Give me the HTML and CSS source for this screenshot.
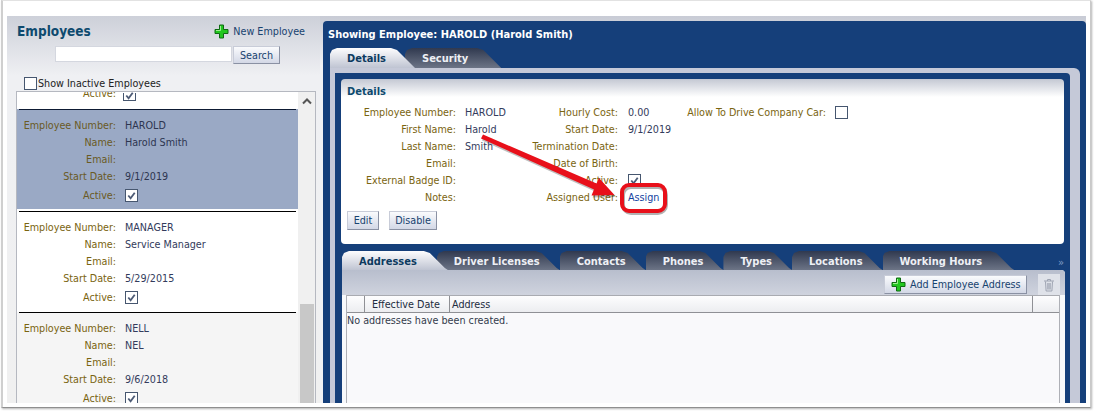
FILE: index.html
```html
<!DOCTYPE html>
<html lang="en">
<head>
<meta charset="utf-8">
<title>Employees</title>
<link rel="stylesheet" href="styles.css">
</head>
<body>
<div class="frame">
  <div class="app">
    <aside class="left">
      <div class="left-head">
        <h1 class="left-title">Employees</h1>
        <a class="new-link">
          <svg class="plus" viewBox="0 0 15 15"><path d="M5.500 1h4v4.500H14v4H9.500V14h-4V9.500H1v-4h4.500z" fill="#22c71f" stroke="#0f6b12" stroke-width="1" stroke-linejoin="round"/><path d="M6.500 2v4.500H2" fill="none" stroke="#9cf08f" stroke-width="1"/></svg>
          New Employee
        </a>
      </div>
      <div class="search-row">
        <input class="search-input" type="text" aria-label="Search">
        <button class="btn search-btn">Search</button>
      </div>
      <label class="inactive"><span class="cb"></span>Show Inactive Employees</label>
      <div class="list">
        <div class="list-items">
          <div class="partial">
            <span class="lbl">Active:</span>
            <span class="cb on"><svg viewBox="0 0 12 12"><path d="M2.500 6l2.500 3 4.500-6" fill="none" stroke="#4d5b76" stroke-width="2"/></svg></span>
          </div>
          <div class="emp sel">
            <div class="r"><span class="lbl">Employee Number:</span><span class="val">HAROLD</span></div>
            <div class="r"><span class="lbl">Name:</span><span class="val">Harold Smith</span></div>
            <div class="r"><span class="lbl">Email:</span><span class="val"></span></div>
            <div class="r"><span class="lbl">Start Date:</span><span class="val">9/1/2019</span></div>
            <div class="r last"><span class="lbl">Active:</span><span class="cb on"><svg viewBox="0 0 12 12"><path d="M2.500 6l2.500 3 4.500-6" fill="none" stroke="#4d5b76" stroke-width="2"/></svg></span></div>
          </div>
          <div class="emp">
            <div class="r"><span class="lbl">Employee Number:</span><span class="val">MANAGER</span></div>
            <div class="r"><span class="lbl">Name:</span><span class="val">Service Manager</span></div>
            <div class="r"><span class="lbl">Email:</span><span class="val"></span></div>
            <div class="r"><span class="lbl">Start Date:</span><span class="val">5/29/2015</span></div>
            <div class="r last"><span class="lbl">Active:</span><span class="cb on"><svg viewBox="0 0 12 12"><path d="M2.500 6l2.500 3 4.500-6" fill="none" stroke="#4d5b76" stroke-width="2"/></svg></span></div>
          </div>
          <div class="emp alt">
            <div class="r"><span class="lbl">Employee Number:</span><span class="val">NELL</span></div>
            <div class="r"><span class="lbl">Name:</span><span class="val">NEL</span></div>
            <div class="r"><span class="lbl">Email:</span><span class="val"></span></div>
            <div class="r"><span class="lbl">Start Date:</span><span class="val">9/6/2018</span></div>
            <div class="r last"><span class="lbl">Active:</span><span class="cb on"><svg viewBox="0 0 12 12"><path d="M2.500 6l2.500 3 4.500-6" fill="none" stroke="#4d5b76" stroke-width="2"/></svg></span></div>
          </div>
        </div>
        <div class="scrollbar">
          <svg class="chev" viewBox="0 0 10 7"><path d="M1 5.500l4-4 4 4" fill="none" stroke="#555" stroke-width="2"/></svg>
          <div class="thumb"></div>
        </div>
      </div>
    </aside>

    <main class="right">
      <div class="show-title">Showing Employee: HAROLD (Harold Smith)</div>
      <div class="tabs tabs-top">
        <div class="tab active tab-a">Details</div>
        <div class="tab tab-b">Security</div>
      </div>
      <div class="band">
        <div class="navy">
          <section class="card">
            <h2 class="card-title">Details</h2>
            <div class="form">
              <div class="fcol c1">
                <span class="lbl">Employee Number:</span><span class="val">HAROLD</span>
                <span class="lbl">First Name:</span><span class="val">Harold</span>
                <span class="lbl">Last Name:</span><span class="val">Smith</span>
                <span class="lbl">Email:</span><span class="val"></span>
                <span class="lbl">External Badge ID:</span><span class="val"></span>
                <span class="lbl">Notes:</span><span class="val"></span>
              </div>
              <div class="fcol c2">
                <span class="lbl">Hourly Cost:</span><span class="val">0.00</span>
                <span class="lbl">Start Date:</span><span class="val">9/1/2019</span>
                <span class="lbl">Termination Date:</span><span class="val"></span>
                <span class="lbl">Date of Birth:</span><span class="val"></span>
                <span class="lbl">Active:</span><span class="cb on"><svg viewBox="0 0 12 12"><path d="M2.500 6l2.500 3 4.500-6" fill="none" stroke="#4d5b76" stroke-width="2"/></svg></span>
                <span class="lbl">Assigned User:</span><a class="assign">Assign</a>
              </div>
              <div class="fcol c3">
                <span class="lbl">Allow To Drive Company Car:</span><span class="cb"></span>
              </div>
            </div>
            <div class="actions">
              <button class="btn edit-btn">Edit</button>
              <button class="btn disable-btn">Disable</button>
            </div>
          </section>
          <div class="tabs tabs-sub">
            <div class="tab active tab-addr">Addresses</div>
            <div class="tab tab-dl">Driver Licenses</div>
            <div class="tab">Contacts</div>
            <div class="tab">Phones</div>
            <div class="tab">Types</div>
            <div class="tab">Locations</div>
            <div class="tab tab-wh">Working Hours</div>
            <span class="more">»</span>
          </div>
          <section class="lower">
            <div class="toolbar">
              <button class="btn add-btn">
                <svg class="plus" viewBox="0 0 15 15"><path d="M5.500 1h4v4.500H14v4H9.500V14h-4V9.500H1v-4h4.500z" fill="#22c71f" stroke="#0f6b12" stroke-width="1" stroke-linejoin="round"/><path d="M6.500 2v4.500H2" fill="none" stroke="#9cf08f" stroke-width="1"/></svg>
                Add Employee Address
              </button>
              <div class="trash-btn">
                <svg viewBox="0 0 12 14" class="trash"><path d="M1 3h10M4.500 3V1.500h3V3M2.500 3.500l.6 9.500h5.800l.6-9.500M4.800 5v6.500M6 5v6.500M7.200 5v6.500" fill="none" stroke="#9ea4b2" stroke-width="1"/></svg>
              </div>
            </div>
            <div class="table">
              <div class="thead">
                <div class="th"></div>
                <div class="th th-date">Effective Date</div>
                <div class="th">Address</div>
                <div class="th"></div>
              </div>
              <div class="tbody">No addresses have been created.</div>
            </div>
          </section>
        </div>
      </div>
    </main>
  </div>
</div>
<svg class="annot" viewBox="0 0 1094 411" aria-hidden="true">
  <rect class="annot-shadow" x="623" y="187" width="43" height="26" rx="8"/>
  <rect class="annot-box" x="622" y="185" width="43" height="26" rx="7"/>
  <polygon class="annot-arrow-shadow" points="484,136 597.500,185 600,180 615.500,197 592.500,197.500 595,191.500 482,140.500"/>
  <polygon class="annot-arrow" points="483,134.500 596.500,183.500 599,178 614.500,195 591.500,195.500 594,189.500 481,138.500"/>
</svg>
</body>
</html>
```
FILE: styles.css
```css
* { box-sizing: border-box; }
html, body { margin: 0; padding: 0; background: #fff; }
body {
  width: 1094px;
  height: 411px;
  overflow: hidden;
  position: relative;
  font-family: "DejaVu Sans Condensed", "DejaVu Sans", sans-serif;
  font-size: 10.7px;
  color: #333b5c;
}
.frame {
  width: 1090px;
  height: 408px;
  margin-left: 1px;
  background: #fff;
  border-top: 1px solid #e2e2e2;
  border-left: 2px solid #cfcfcf;
  border-right: 1px solid #c9c9c9;
  border-bottom: 1px solid #8f8f8f;
  box-shadow: 1px 1px 2px rgba(0,0,0,.3);
  padding: 15px 4px 4px 4px;
}
.app {
  display: flex;
  height: 387px;
  overflow: hidden;
  background: linear-gradient(#c8cbd5 0, #f2f2f4 50px, #f2f2f4 100%);
}
.lbl { color: #7a6410; text-align: right; white-space: nowrap; }
.val { color: #333b5c; white-space: nowrap; }

/* left column */
.left { width: 313px; flex: none; background: linear-gradient(#cdd0d9 0, #eff0f3 60px, #f0f0f0 100%); display: flex; flex-direction: column; }
.left-head { height: 30px; display: flex; justify-content: space-between; align-items: center; padding: 0 15px 0 10px; }
.left-title { margin: 0; font-size: 13.5px; font-weight: 700; color: #0e4a6e; }
.new-link { display: flex; align-items: center; gap: 4px; color: #17436f; }
.plus { width: 15px; height: 15px; flex: none; }
.search-row { display: flex; margin: 0 0 0 48px; height: 17px; }
.search-input { width: 177px; height: 16px; border: 1px solid #d4d7df; background: #fff; padding: 0; margin-right: 1px; }
.btn {
  font: inherit;
  color: #17436f;
  height: 19px;
  padding: 0 6px;
  border: 1px solid #c8ccd8;
  border-right-color: #8a91a3;
  border-bottom-color: #8a91a3;
  background: linear-gradient(#fafbfd, #d3d8e6);
  display: inline-flex;
  align-items: center;
  justify-content: center;
}
.search-btn { height: 18px; width: 47px; padding: 0; }
.edit-btn { width: 32px; padding: 0; }
.disable-btn { width: 48px; padding: 0; }
.inactive { display: flex; align-items: center; height: 14px; margin: 13px 0 0 17px; color: #222; }
.inactive .cb { margin-right: 1px; }
.cb { width: 13px; height: 13px; border: 1px solid #46566f; background: #fff; display: inline-block; flex: none; }
.cb.on svg { display: block; width: 11px; height: 11px; }
.list { margin: 1px 0 0 9px; width: 300px; height: 312px; border: 1px solid #b5b8c0; border-bottom: 0; display: flex; background: #fff; overflow: hidden; flex: none; }
.list-items { width: 281px; flex: none; }
.partial { height: 16px; display: flex; align-items: flex-end; gap: 7px; overflow: hidden; padding-bottom: 7px; }
.partial .lbl { width: 99px; line-height: 13px; margin-bottom: 1px; }
.partial .cb { border-top: 0; height: 8px; }
.partial .cb svg { margin-top: -3px; }
.emp { margin: 0 0 2px; padding: 8px 2px 0; height: 99px; background: #fff; }
.emp::before { content: ""; display: block; height: 1px; background: #000; margin: -8px 0 7px; }
.emp.sel { background: #9aa9c5; height: 100px; margin-top: 1px; padding-top: 0; }
.emp.sel::before { margin-top: 0; background: #0d1a33; }
.emp.sel .lbl { color: #6a5a24; }
.emp.sel .val { color: #2d3550; }
.emp.alt { background: #f5f5f5; margin: 0; height: 110px; }
.r { display: grid; grid-template-columns: 97px auto; column-gap: 9px; height: 17px; line-height: 17px; align-items: center; }
.r.last { height: 18px; margin-top: 1px; }
.scrollbar { flex: 1; background: #f0f0f0; position: relative; display: flex; flex-direction: column; align-items: center; padding-top: 6px; }
.chev { width: 10px; height: 7px; }
.thumb { position: absolute; left: 2px; right: 1px; top: 212px; bottom: 0; background: #c8c8c8; }

/* right column */
.right { width: 763px; margin: 5px 0 0 3px; background: #153f7a; border-radius: 4px 4px 0 0; flex: none; overflow: hidden; }
.show-title { height: 27px; padding: 7px 0 0 5px; line-height: 14px; font-size: 11px; font-weight: 700; color: #fff; white-space: nowrap; }
.tabs { display: flex; height: 19px; font-size: 11px; font-weight: 700; }
.tabs-top { margin-left: 7px; height: 20px; }
.tab {
  padding: 0 20px 0 17px;
  line-height: 21px;
  color: #eef0f5;
  white-space: nowrap;
  background: linear-gradient(#30394f, #6c7486);
  clip-path: polygon(0 100%, 0 6px, 2px 2px, 7px 0, calc(100% - 24px) 0, calc(100% - 18px) 2px, calc(100% - 3px) 17px, 100% 100%);
}
.tab.active { background: linear-gradient(#fdfdfe, #bfc4d2); color: #0c3a5f; z-index: 2; }
.tab-a { padding-right: 29px; }
.tab-b { padding-right: 33px; margin-left: -10px; }
.tab-addr { padding-right: 31px; }
.tab-dl { margin-left: -11px; }
.tab-wh { padding-right: 32px; }
.more { margin-left: auto; color: #7f9cc4; font-weight: 400; line-height: 24px; padding-right: 1px; }
.band { margin: 0 0 0 7px; width: 750px; height: 340px; background: #c5c9d8; border-radius: 0 6px 0 0; padding: 5px 10px 0 5px; }
.navy { background: #153f7a; height: 100%; padding: 6px 6px 0 6px; border-radius: 0 4px 0 0; }
.card { height: 165px; background: linear-gradient(#c4c8d3 0, #fff 18px); border-radius: 4px; padding: 5px 6px 0; }
.card-title { margin: 0; height: 15px; line-height: 15px; font-size: 11px; font-weight: 700; color: #0e4a6e; }
.form { display: flex; height: 108px; padding-top: 5px; }
.fcol { display: grid; grid-auto-rows: 17px; column-gap: 9px; align-items: center; align-content: start; }
.c1 { grid-template-columns: 109px 1fr; width: 171px; }
.c2 { grid-template-columns: 100px 1fr; width: 169px; column-gap: 10px; }
.c3 { grid-template-columns: 139px 1fr; }
.assign { color: #153fa0; }
.actions { display: flex; gap: 10px; margin-top: 4px; }
.tabs-sub { margin: 7px 0 0 1px; width: 723px; }
.lower { margin-left: 1px; width: 723px; height: 140px; background: #f8f9fb; border-radius: 0 4px 0 0; }
.toolbar { height: 25px; display: flex; justify-content: flex-end; align-items: flex-end; padding: 0 5px 0 0; gap: 11px; background: linear-gradient(#b8becd, #cfd3de); border-radius: 0 4px 0 0; }
.add-btn { gap: 4px; width: 143px; padding: 0 0 0 6px; margin-bottom: 1px; justify-content: flex-start; }
.trash-btn { width: 22px; height: 21px; background: #dfe2e9; display: flex; align-items: center; justify-content: center; }
.trash { width: 12px; height: 14px; }
.table { margin-left: 4px; width: 714px; height: 115px; background: #f9f9fb; border-left: 1px solid #aeb0b6; border-right: 1px solid #aeb0b6; }
.thead { display: grid; grid-template-columns: 18px 85px 1fr 26px; height: 18px; background: linear-gradient(#fdfdfe, #ecedf0); border-top: 1px solid #a9abb1; border-bottom: 1px solid #8f9095; }
.th { border-right: 1px solid #8f9095; padding-left: 2px; line-height: 17px; color: #222c40; }
.th-date { padding-left: 7px; }
.th:last-child { border-right: 0; }
.tbody { line-height: 16px; color: #333b4c; }

/* annotation */
.annot { position: absolute; left: 0; top: 0; width: 1094px; height: 411px; pointer-events: none; }
.annot-box { fill: none; stroke: #e8101a; stroke-width: 4; }
.annot-shadow { fill: none; stroke: rgba(0,0,0,.3); stroke-width: 4; }
.annot-arrow { fill: #e8101a; }
.annot-arrow-shadow { fill: rgba(0,0,0,.25); }
```
